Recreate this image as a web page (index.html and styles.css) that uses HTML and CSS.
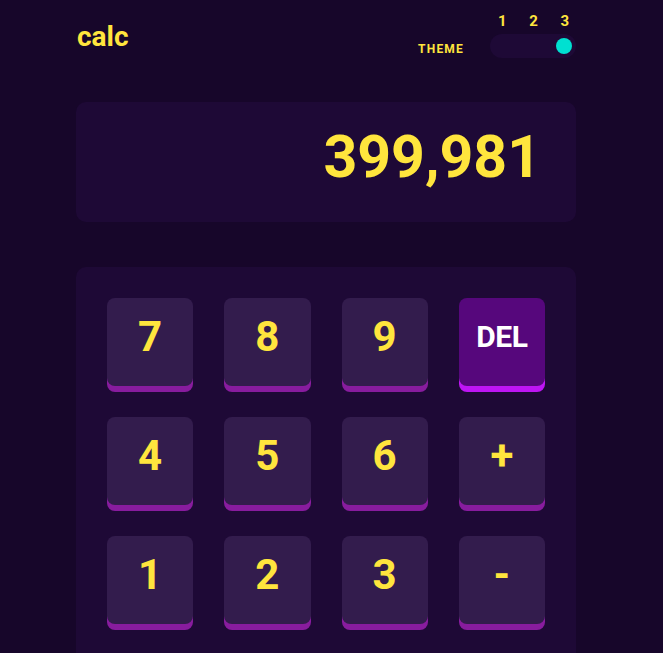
FILE: index.html
```html
<!DOCTYPE html>
<html lang="en">
<head>
<meta charset="utf-8">
<title>calc</title>
<link rel="stylesheet" href="styles.css">
</head>
<body>
<main class="calc">
  <header class="top">
    <h1 class="logo">calc</h1>
    <div class="theme">
      <span class="theme-label">THEME</span>
      <div class="toggle">
        <div class="toggle-nums"><span>1</span><span>2</span><span>3</span></div>
        <div class="toggle-track"><span class="toggle-knob"></span></div>
      </div>
    </div>
  </header>
  <section class="screen"><span class="screen-value">399,981</span></section>
  <section class="keypad">
    <button class="key">7</button>
    <button class="key">8</button>
    <button class="key">9</button>
    <button class="key key-del">DEL</button>
    <button class="key">4</button>
    <button class="key">5</button>
    <button class="key">6</button>
    <button class="key">+</button>
    <button class="key">1</button>
    <button class="key">2</button>
    <button class="key">3</button>
    <button class="key">-</button>
    <button class="key">.</button>
    <button class="key">0</button>
    <button class="key">/</button>
    <button class="key">x</button>
    <button class="key key-del key-wide">RESET</button>
    <button class="key key-eq key-wide">=</button>
  </section>
</main>
</body>
</html>
```
FILE: styles.css
```css
html, body {
  margin: 0;
  padding: 0;
  background: #17062a;
  overflow: hidden;
}
body {
  font-family: Roboto, "Liberation Sans", sans-serif;
  font-weight: 700;
  color: #ffe53d;
}
.calc {
  width: 500px;
  margin-left: 76px;
}
.top {
  height: 58px;
  display: flex;
  justify-content: space-between;
  align-items: flex-end;
  margin-bottom: 44px;
}
.logo {
  margin: 0 0 7px 1px;
  font-size: 28px;
  line-height: 1;
  font-weight: 700;
}
.theme {
  display: flex;
  align-items: flex-end;
  gap: 26px;
}
.theme-label {
  font-size: 12px;
  line-height: 1;
  letter-spacing: 1.2px;
  margin-bottom: 3px;
}
.toggle {
  width: 86px;
  display: flex;
  flex-direction: column;
}
.toggle-nums {
  display: flex;
  justify-content: space-between;
  padding: 0 7px 0 8px;
  font-size: 15px;
  line-height: 1;
  margin-bottom: 5px;
}
.toggle-track {
  height: 24px;
  border-radius: 12px;
  background: #1e0936;
  display: flex;
  align-items: center;
  justify-content: flex-end;
  padding: 0 4px;
}
.toggle-knob {
  width: 16px;
  height: 16px;
  border-radius: 50%;
  background: #00e0d1;
}
.screen {
  height: 120px;
  border-radius: 10px;
  background: #1e0936;
  display: flex;
  align-items: center;
  justify-content: flex-end;
  padding: 0 35px 12px 35px;
  box-sizing: border-box;
}
.screen-value {
  font-size: 59px;
  line-height: 1;
}
.keypad {
  margin-top: 45px;
  background: #1e0936;
  border-radius: 10px;
  padding: 31px;
  display: grid;
  grid-template-columns: repeat(4, 1fr);
  column-gap: 31px;
  row-gap: 31px;
}
.key {
  height: 88px;
  border: 0;
  border-radius: 8px;
  background: #331c4d;
  box-shadow: 0 6px 0 #881c9e;
  color: #ffe53d;
  font-family: inherit;
  font-weight: 700;
  font-size: 42px;
  line-height: 1;
  padding: 0 0 10px 0;
  display: flex;
  align-items: center;
  justify-content: center;
}
.key-del {
  background: #56077c;
  box-shadow: 0 6px 0 #be15f4;
  color: #ffffff;
  font-size: 30px;
  letter-spacing: -0.5px;
}
.key-eq {
  background: #00e0d1;
  box-shadow: 0 6px 0 #6cf9f1;
  color: #1a2327;
}
.key-wide {
  grid-column: span 2;
}
```
